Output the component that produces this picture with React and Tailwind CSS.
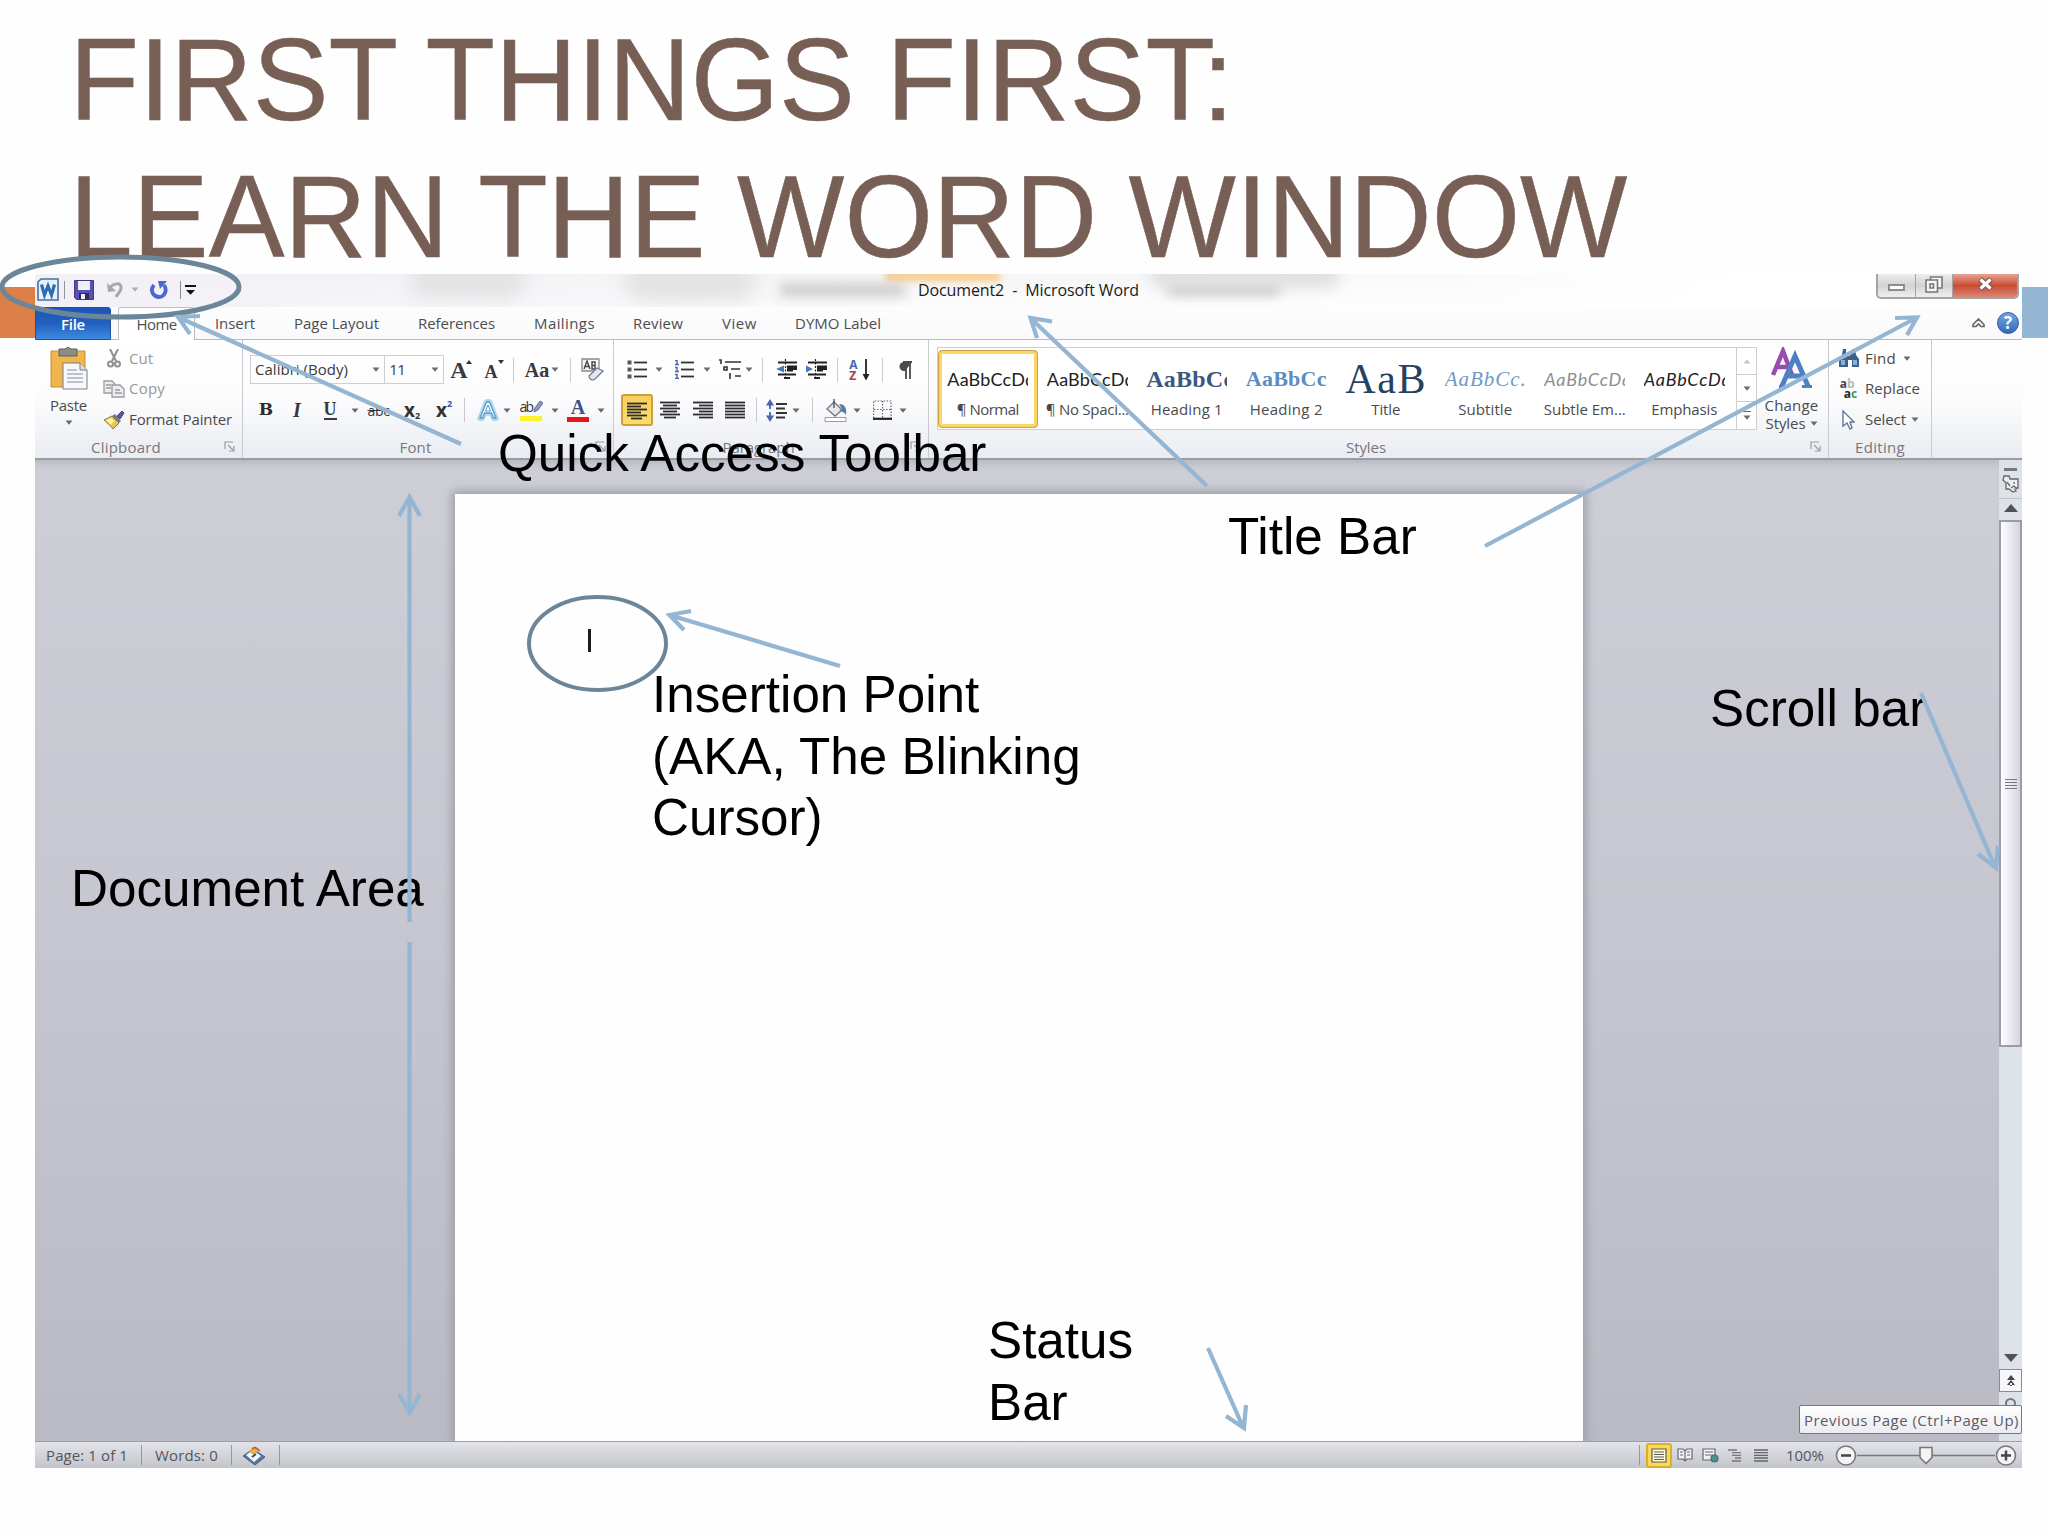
import React, { useLayoutEffect, useRef, useState } from "react";

/* Text whose tracking is adjusted so that it fills a given width. */
function Fit({ w, className = "", children }) {
  const ref = useRef(null);
  const [ls, setLs] = useState(0);
  useLayoutEffect(() => {
    const natural = ref.current.getBoundingClientRect().width;
    setLs((w - natural) / String(children).length);
  }, [w, children]);
  return (
    <span ref={ref} className={"inline-block whitespace-pre " + className} style={{ letterSpacing: ls }}>
      {children}
    </span>
  );
}

const Cell = ({ className = "", children }) => (
  <div className={"flex shrink-0 items-center justify-center " + className}>{children}</div>
);

const Down = ({ className = "" }) => (
  <svg width="8" height="5" viewBox="0 0 8 5" className={"shrink-0 " + className}>
    <path d="M0.5 0.5h7L4 4.7z" fill="#6a6a70" />
  </svg>
);

const Sep = ({ className = "h-6 bg-[#c9c9cd]" }) => <div className={"w-px shrink-0 " + className} />;

const Launcher = () => (
  <svg width="11" height="11" viewBox="0 0 11 11" fill="none" stroke="#9a9aa0" strokeWidth="1.2">
    <path d="M1 8V1h8M4 4l5 5M10 5v5H5" />
  </svg>
);

const Lines = ({ rows, className = "" }) => (
  <svg width="20" height="18" viewBox="0 0 20 18" className={className} stroke="#2c2c30" strokeWidth="1.8">
    {rows.map(([a, b], i) => (
      <path key={i} d={`M${a} ${1.5 + i * 3}H${b}`} />
    ))}
  </svg>
);

const Group = ({ label, w, className = "", launcher, children }) => (
  <div className={"flex h-full shrink-0 flex-col border-r border-[#c8cad0] " + className}>
    <div className="h-[95px]">{children}</div>
    <div className="flex h-[23px] items-center">
      <div className="flex-1 text-center leading-5 text-[#77777c]">
        <Fit w={w}>{label}</Fit>
      </div>
      {launcher && <Cell className="w-[25px]"><Launcher /></Cell>}
    </div>
  </div>
);

function TitleBar() {
  return (
    <div className="relative flex h-[33px] items-start overflow-hidden bg-gradient-to-b from-[#f5f5f6] to-[#fdfdfd]">
      <div className="absolute inset-0 bg-gradient-to-r from-[#f2f0f5] via-transparent to-white" />
      <div className="absolute left-[375px] top-[-12px] h-9 w-[115px] rounded-full bg-[#e2e2e4] blur-[9px]" />
      <div className="absolute left-[590px] top-[-10px] h-9 w-[130px] rounded-full bg-[#e2e2e4] blur-[9px]" />
      <div className="absolute left-[850px] top-[-8px] h-4 w-[115px] bg-[#f7d199] blur-[3px]" />
      <div className="absolute left-[745px] top-[10px] h-3 w-[125px] bg-[#c9c9ca] blur-[6px]" />
      <div className="absolute left-[1133px] top-[9px] h-3 w-[112px] bg-[#c4c4c6] blur-[6px]" />
      <div className="absolute left-[1115px] top-[-14px] h-7 w-[190px] rounded-full bg-[#e0e0e2] blur-[7px]" />
      <div className="absolute left-[1400px] top-0 h-full w-[587px] bg-gradient-to-r from-transparent via-white to-white" />
      <div className="relative flex h-[31px] w-full items-center">
        <Cell className="w-[25px]">
          <svg width="22" height="23" viewBox="0 0 22 23">
            <path d="M4 1h17v21H1V4z" fill="#e8f1fb" stroke="#47719f" strokeWidth="1.6" />
            <path d="M4.5 6.5l3 10.5 3.5-9 3.5 9 3-10.5" fill="none" stroke="#2b6cb2" strokeWidth="3.2" />
          </svg>
        </Cell>
        <Cell className="w-[9px]"><Sep className="h-[18px] bg-[#8b9a99]" /></Cell>
        <Cell className="w-[30px]">
          <svg width="20" height="20" viewBox="0 0 20 20">
            <path d="M0.5 0.5h19v19h-17l-2-2z" fill="#5a50b4" stroke="#3f3890" />
            <path d="M4 1h12v9H4z" fill="#eef0fb" />
            <path d="M5 13h10v6H5z" fill="#2d2a5c" />
            <path d="M7 14h4v5H7z" fill="#eef0fb" />
          </svg>
        </Cell>
        <Cell className="w-[32px]">
          <svg width="18" height="18" viewBox="0 0 18 18" fill="none" stroke="#a9a6ac" strokeWidth="3">
            <path d="M4 7c3-5 12-6 11 0 0 4-3 5-5 9" />
            <path d="M1 2l1 9 8-1z" fill="#a9a6ac" stroke="none" />
          </svg>
        </Cell>
        <Cell className="w-[8px]"><Down className="opacity-50" /></Cell>
        <Cell className="w-[40px]">
          <svg width="20" height="20" viewBox="0 0 20 20" fill="none" stroke="#4a68d0" strokeWidth="3.8">
            <path d="M5 5c-5 6 0 12 5 12s9-6 5-12" />
            <path d="M9 1h9L11 9z" fill="#4a68d0" stroke="none" />
          </svg>
        </Cell>
        <Cell className="w-[2px]"><Sep className="h-[18px] bg-[#8b8b8f]" /></Cell>
        <Cell className="w-[19px]">
          <svg width="11" height="10" viewBox="0 0 11 10" fill="#111"><path d="M0 0h11v2H0zM1 5h9L5.500 9.800z" /></svg>
        </Cell>
        <div className="ml-[718px] flex-1 text-[16px] leading-5 text-[#1b1b1d]">
          <Fit w={221}>Document2  -  Microsoft Word</Fit>
        </div>
      </div>
      <div className="absolute right-[3px] top-0 flex h-[25px] w-[143px] overflow-hidden rounded-b-[5px] border-2 border-t-0 border-[#a4a4a6] bg-gradient-to-b from-[#eeeeef] via-[#d2d2d4] to-[#f0f0f0]">
        <Cell className="w-[38px] border-r border-[#a4a4a6]">
          <div className="mt-1 h-[7px] w-[17px] border-2 border-[#8d8d90] bg-white" />
        </Cell>
        <Cell className="w-[37px] border-r border-[#a4a4a6]">
          <svg width="18" height="17" viewBox="0 0 18 17" fill="#f6f6f6" stroke="#77777a" strokeWidth="1.6" className="-mt-0.5">
            <path d="M5.500 1h11.500v11H5.500z" /><path d="M1 4h11.500v12H1z" /><path d="M5 8h3.500v4H5z" />
          </svg>
        </Cell>
        <Cell className="flex-1 bg-gradient-to-b from-[#e7a294] via-[#cc4a33] to-[#d98573]">
          <svg width="17" height="14" viewBox="0 0 17 14" className="-mt-1">
            <path d="M3 2l11 10M14 2L3 12" stroke="#7a5a56" strokeWidth="5.500" />
            <path d="M3.500 2.500l10 9M13.500 2.500l-10 9" stroke="#fff" strokeWidth="3.200" />
          </svg>
        </Cell>
      </div>
    </div>
  );
}

function Tabs() {
  return (
    <div className="flex h-[33px] items-stretch bg-gradient-to-b from-[#fdfdfd] to-[#f9f9fb] text-[15px] leading-5 text-[#4d4d50]">
      <Cell className="w-[76px] rounded-t-[3px] border border-[#234f9c] bg-gradient-to-b from-[#1d55b8] via-[#2360c0] to-[#3d8be0] font-semibold text-white">
        <Fit w={24}>File</Fit>
      </Cell>
      <div className="w-[7px] border-b border-[#b9b9bd]" />
      <Cell className="w-[77px] rounded-t-[3px] border border-b-0 border-[#bfbfc3] bg-white">
        <Fit w={40}>Home</Fit>
      </Cell>
      <div className="flex flex-1 items-center border-b border-[#b9b9bd]">
        <Fit w={40} className="ml-[20px]">Insert</Fit>
        <Fit w={85} className="ml-[39px]">Page Layout</Fit>
        <Fit w={77} className="ml-[39px]">References</Fit>
        <Fit w={61} className="ml-[39px]">Mailings</Fit>
        <Fit w={50} className="ml-[38px]">Review</Fit>
        <Fit w={35} className="ml-[39px]">View</Fit>
        <Fit w={86} className="ml-[38px]">DYMO Label</Fit>
        <div className="flex-1" />
        <svg width="13" height="10" viewBox="0 0 13 10" fill="none" stroke="#66666a" strokeWidth="1.600">
          <path d="M1 6.500L6.500 1 12 6.500v2H9L6.500 6 4 8.500H1z" />
        </svg>
        <div className="ml-[12px] mr-[3px] flex size-[22px] items-center justify-center rounded-full border border-[#2d5ca8] bg-gradient-to-b from-[#76a5e2] to-[#3468bd] text-[17px] font-bold text-white">?</div>
      </div>
    </div>
  );
}

function Clipboard() {
  return (
    <Group label="Clipboard" w={70} launcher className="w-[208px]">
      <div className="flex">
        <div className="flex w-[67px] flex-col items-center pt-[7px] text-[#4a4a4d]">
          <svg width="38" height="43" viewBox="0 0 38 43">
            <path d="M1 4h34v36H1z" fill="#f0b54c" stroke="#c68f35" />
            <path d="M9 2h6l3-2 3 2h6v7H9z" fill="#8b8c86" stroke="#5e5f5a" />
            <path d="M13 16h17l7 7v19H13z" fill="#f7f8fb" stroke="#777d88" />
            <path d="M17 23h10M17 27h16M17 31h16M17 35h16" stroke="#a9b0c0" strokeWidth="1.400" />
            <path d="M30 16v7h7" fill="#dde" stroke="#777d88" />
          </svg>
          <div className="mt-[5px] leading-5"><Fit w={37}>Paste</Fit></div>
          <Down className="mt-[5px]" />
        </div>
        <div className="flex flex-1 flex-col pt-[3px] text-[#97979a]">
          <div className="flex h-[30px] items-center">
            <Cell className="w-[27px] justify-end pr-2">
              <svg width="14" height="19" viewBox="0 0 14 19" fill="none" stroke="#8f8f93" strokeWidth="2">
                <path d="M3 0l6 12M11 0L5 12" /><circle cx="3.500" cy="15" r="2.500" /><circle cx="10.500" cy="15" r="2.500" />
              </svg>
            </Cell>
            <Fit w={24}>Cut</Fit>
          </div>
          <div className="flex h-[31px] items-center">
            <Cell className="w-[27px] pr-1">
              <svg width="22" height="18" viewBox="0 0 22 18" fill="#eeeef0" stroke="#9b9ba0" strokeWidth="1.300">
                <path d="M1 1h8l3 3v9H1z" /><path d="M9 5h8l4 4v8H9z" /><path d="M3 5h5M3 8h5M12 10h5M12 13h7" />
              </svg>
            </Cell>
            <Fit w={36}>Copy</Fit>
          </div>
          <div className="flex h-[31px] items-center text-[#4a4a4d]">
            <Cell className="w-[27px] pr-1">
              <svg width="22" height="20" viewBox="0 0 22 20">
                <path d="M1 10l8-4 7 7-6 6C7 15 4 13 1 10z" fill="#e6c84e" stroke="#8d7a35" />
                <path d="M3 10l5-2 3 3-3 4z" fill="#fff2a8" />
                <path d="M9 6l3-2 6 7-2 2z" fill="#77757d" />
                <path d="M14 6l5-5 2 2-4 6z" fill="#63589c" stroke="#48407c" />
              </svg>
            </Cell>
            <Fit w={103}>Format Painter</Fit>
          </div>
        </div>
      </div>
    </Group>
  );
}

function FontGroup() {
  const serif = "font-['Liberation_Serif',serif] font-bold leading-none text-[#39393c]";
  return (
    <Group label="Font" w={32} launcher className="w-[371px]">
      <div className="mt-[15px] flex h-[29px] pl-[7px] text-[#3a3a3d]">
        <div className="flex w-[136px] items-center justify-between border border-[#cfcfd3] pl-1 pr-1">
          <Fit w={93}>Calibri (Body)</Fit><Down />
        </div>
        <div className="flex w-[59px] items-center justify-between border border-l-0 border-[#cfcfd3] pl-1 pr-1">
          <Fit w={16}>11</Fit><Down />
        </div>
        <Cell className={"w-[34px] text-[24px] " + serif}>A<svg width="6" height="4" viewBox="0 0 6 4" className="-ml-0.5 -mt-4"><path d="M0 4h6L3 0z" fill="#333" /></svg></Cell>
        <Cell className={"w-[32px] text-[18px] " + serif}><span className="mt-1">A</span><svg width="6" height="4" viewBox="0 0 6 4" className="-mt-4"><path d="M0 0h6L3 4z" fill="#333" /></svg></Cell>
        <Cell className="w-[6px]"><Sep /></Cell>
        <Cell className={"w-[52px] gap-0.5 text-[20px] " + serif}>Aa<Down /></Cell>
        <Cell className="w-[4px]"><Sep /></Cell>
        <Cell className="w-[41px]">
          <svg width="23" height="23" viewBox="0 0 23 23" fill="none">
            <path d="M1 1h17v12H1z" fill="#f6f6f8" stroke="#88888e" strokeWidth="1.300" />
            <path d="M3 11l3-8 3 8M4.500 8.500h3M11 4h3v7h-3zM11 7.500h3" stroke="#44444a" strokeWidth="1.400" />
            <path d="M8 18l8-8 6 3-8 8c-3 2-6 0-6-3z" fill="#e3e6ef" stroke="#777d94" strokeWidth="1.300" />
          </svg>
        </Cell>
      </div>
      <div className="mt-[10px] flex h-[32px] pl-[9px]">
        <Cell className="w-[28px] font-['DejaVu_Serif',serif] text-[17px] font-bold text-[#2c2c2f]">B</Cell>
        <Cell className={"w-[34px] text-[20px] italic " + serif}>I</Cell>
        <Cell className="w-[32px]"><span className={"border-b-2 border-[#39393c] text-[18px] " + serif}>U</span></Cell>
        <Cell className="w-[17px]"><Down /></Cell>
        <Cell className="w-[31px] text-[14px] text-[#39393c] line-through"><Fit w={22}>abc</Fit></Cell>
        <Cell className="w-[36px] text-[19px] font-bold text-[#333]">x<span className="-mb-3 text-[9px]">2</span></Cell>
        <Cell className="w-[28px] text-[19px] font-bold text-[#333]">x<span className="-mt-3 text-[9px] text-[#3b4fa8]">2</span></Cell>
        <Cell className="w-[12px]"><Sep /></Cell>
        <Cell className="w-[36px]">
          <svg width="22" height="22" viewBox="0 0 22 22" fill="none" strokeLinejoin="round">
            <path d="M2 20L9 2h4l7 18h-4l-2-5H8l-2 5z" stroke="#a9d5ee" strokeWidth="3.500" />
            <path d="M3 19L9.500 3h3L19 19h-2.500l-2-5h-7l-2 5z" fill="#f4fbff" stroke="#5b9cc6" strokeWidth="1.300" />
            <path d="M8.500 12h5L11 6z" fill="#fff" stroke="#5b9cc6" />
          </svg>
        </Cell>
        <Cell className="w-[2px]"><Down /></Cell>
        <Cell className="w-[46px]">
          <div className="flex flex-col">
            <div className="flex h-[15px] items-center">
              <span className="text-[14px] leading-none text-[#333]"><Fit w={13}>ab</Fit></span>
              <svg width="10" height="13" viewBox="0 0 10 13"><path d="M1 12l1-4 5-7 3 2-5 7z" fill="#8f95c6" stroke="#666ca0" /></svg>
            </div>
            <div className="mt-0.5 h-[5px] w-[22px] bg-[#fbf22a]" />
          </div>
        </Cell>
        <Cell className="w-[2px]"><Down /></Cell>
        <Cell className="w-[44px]">
          <div className="flex w-[22px] flex-col items-center">
            <span className="font-['Liberation_Serif',serif] text-[20px] font-bold leading-[16px] text-[#3f4f8c]">A</span>
            <div className="mt-0.5 h-[5px] w-full bg-[#ee1216]" />
          </div>
        </Cell>
        <Cell className="w-[2px]"><Down /></Cell>
      </div>
    </Group>
  );
}

const Bullets = ({ numbered }) => (
  <svg width="20" height="19" viewBox="0 0 20 19" stroke="#333" strokeWidth="1.800">
    {[2.5, 9.5, 16.5].map((y) => (
      <g key={y}>
        <path d={`M7 ${y}H20`} />
        {numbered ? <path d={`M1 ${y - 2}h2v4M1 ${y + 2}h4`} stroke="#4c63ad" fill="none" strokeWidth="1.400" /> : <path d={`M0.500 ${y}h4`} strokeWidth="4" stroke="#55565c" />}
      </g>
    ))}
  </svg>
);

const Indent = ({ flip }) => (
  <svg width="23" height="21" viewBox="0 0 23 21" stroke="#222" strokeWidth="1.800">
    <path d="M3 3.500h19M12 7.500h10M12 11.500h6M3 15.500h18M9 19h6" />
    <path d="M12 9.500h10" strokeWidth="3" />
    <path d="M10.500 0v21" strokeWidth="1.200" strokeDasharray="2 1.500" />
    <path d={flip ? "M1 6.500v7l7-3.500z" : "M9 6.500v7L1 10z"} fill="#4677bd" stroke="none" />
  </svg>
);

function Paragraph() {
  return (
    <Group label="Paragraph" w={72} launcher className="w-[315px]">
      <div className="mt-[13px] flex h-[33px] pl-[9px]">
        <Cell className="w-[28px]"><Bullets /></Cell>
        <Cell className="w-[16px]"><Down /></Cell>
        <Cell className="w-[33px]"><Bullets numbered /></Cell>
        <Cell className="w-[14px]"><Down /></Cell>
        <Cell className="w-[31px]">
          <svg width="24" height="21" viewBox="0 0 24 21" stroke="#333" strokeWidth="1.600" fill="none">
            <path d="M1 1h2v4M7 3h16M6 8h3v3H6zM13 10h9M12 14v6M17 17h6" />
          </svg>
        </Cell>
        <Cell className="w-[8px]"><Down /></Cell>
        <Cell className="w-[19px]"><Sep /></Cell>
        <Cell className="w-[28px]"><Indent /></Cell>
        <Cell className="w-[32px]"><Indent flip /></Cell>
        <Cell className="w-[10px]"><Sep /></Cell>
        <Cell className="w-[35px]">
          <div className="flex flex-col text-[12px] font-bold leading-[11px]">
            <span className="text-[#4467ad]">A</span><span className="text-[#a63b52]">Z</span>
          </div>
          <svg width="8" height="22" viewBox="0 0 8 22" className="ml-1"><path d="M4 0v18" stroke="#222" strokeWidth="1.800" /><path d="M0.500 15h7L4 21.500z" fill="#222" /></svg>
        </Cell>
        <Cell className="w-[10px]"><Sep /></Cell>
        <Cell className="w-[36px]">
          <svg width="14" height="18" viewBox="0 0 14 18"><path d="M14 1H6a4.500 4.500 0 000 9h1" fill="#4a4a4f" /><path d="M5 1h9M8 1v17M12 1v17" stroke="#4a4a4f" strokeWidth="1.800" /></svg>
        </Cell>
      </div>
      <div className="mt-[8px] flex h-[32px] pl-[7px]">
        <Cell className="w-[32px] rounded-[3px] border-2 border-[#cf9f3d] bg-gradient-to-b from-[#f6cf5e] to-[#fbdd66]">
          <Lines className="mt-0.5" rows={[[0, 20], [0, 14], [0, 20], [0, 14], [0, 20], [4, 15]]} />
        </Cell>
        <Cell className="w-[34px]"><Lines rows={[[0, 20], [3, 17], [0, 20], [3, 17], [0, 20], [4, 16]]} /></Cell>
        <Cell className="w-[32px]"><Lines rows={[[0, 20], [6, 20], [0, 20], [6, 20], [0, 20], [6, 20]]} /></Cell>
        <Cell className="w-[31px]"><Lines rows={[[0, 20], [0, 20], [0, 20], [0, 20], [0, 20], [0, 20]]} /></Cell>
        <Cell className="w-[12px]"><Sep /></Cell>
        <Cell className="w-[30px]">
          <svg width="22" height="23" viewBox="0 0 22 23" stroke="#333" strokeWidth="1.800">
            <path d="M10 5h11M10 9.500h9M10 14h11M10 18.500h9" />
            <path d="M4 4v6M4 13v6" stroke="#4c63ad" /><path d="M0 6.500L4 0l4 6.500zM0 16.500L4 23l4-6.500z" fill="#4c63ad" stroke="none" />
          </svg>
        </Cell>
        <Cell className="w-[8px]"><Down /></Cell>
        <Cell className="w-[24px]"><Sep /></Cell>
        <Cell className="w-[24px]">
          <svg width="24" height="23" viewBox="0 0 24 23">
            <path d="M3 10l7-7 8 8-7 6z" fill="#e6e8ee" stroke="#77797f" strokeWidth="1.400" />
            <path d="M10 3V0M10 3v6" stroke="#55575c" strokeWidth="1.400" />
            <path d="M15 5c6 0 8 4 7 11-2-3-4-4-7-4l3-2z" fill="#527caa" />
            <path d="M1 18.500h21v4H1z" fill="#fff" stroke="#9a9a9e" />
          </svg>
        </Cell>
        <Cell className="w-[18px]"><Down /></Cell>
        <Cell className="w-[32px]">
          <svg width="19" height="20" viewBox="0 0 19 20" fill="none" stroke="#66676c" strokeWidth="1.200">
            <path d="M0.600 18V1h17.500v17M9.500 1v17M1 9.500h17" strokeDasharray="1.500 1.500" /><path d="M0 18.800h19" stroke="#222" strokeWidth="2.200" />
          </svg>
        </Cell>
        <Cell className="w-[10px]"><Down /></Cell>
      </div>
    </Group>
  );
}

const STYLES = [
  { s: "AaBbCcDd", c: "font-[Lato,sans-serif] text-[18px] text-[#222]", n: "¶ Normal", w: 62, sw: 88, on: true },
  { s: "AaBbCcDd", c: "font-[Lato,sans-serif] text-[18px] text-[#222]", n: "¶ No Spaci...", w: 83, sw: 88 },
  { s: "AaBbCc", c: "font-['Liberation_Serif',serif] text-[24px] font-bold text-[#3b5881]", n: "Heading 1", w: 72, sw: 88 },
  { s: "AaBbCc", c: "font-['Liberation_Serif',serif] text-[22px] font-bold text-[#5b8cc2]", n: "Heading 2", w: 73, sw: 81 },
  { s: "AaB", c: "font-['Liberation_Serif',serif] text-[42px] text-[#26405f]", n: "Title", w: 29, sw: 82 },
  { s: "AaBbCc.", c: "font-['Liberation_Serif',serif] text-[21px] italic text-[#6f9ac4]", n: "Subtitle", w: 54, sw: 82 },
  { s: "AaBbCcDd", c: "font-[Lato,sans-serif] text-[18px] italic text-[#8e8e91]", n: "Subtle Em...", w: 82, sw: 88 },
  { s: "AaBbCcDd", c: "font-[Lato,sans-serif] text-[18px] italic text-[#222]", n: "Emphasis", w: 66, sw: 88 },
];

function Styles() {
  return (
    <Group label="Styles" w={40} launcher className="w-[900px]">
      <div className="flex pt-[7px]">
        <div className="ml-[8px] flex h-[83px] w-[820px] border border-[#cdcdd2] bg-white">
          {STYLES.map((t, i) => (
            <div
              key={i}
              className={
                "mt-[2px] flex h-[78px] w-[99.500px] shrink-0 flex-col items-center rounded-[4px] border-[4px] " +
                (t.on ? "border-[#fad763] outline-[1.500px] -outline-offset-1 outline-[#c9a04c]" : "border-transparent")
              }
            >
              <div className={"mt-[4px] flex h-[42px] w-[81px] items-center overflow-hidden leading-none " + t.c}>
                <Fit w={t.sw}>{t.s}</Fit>
              </div>
              <div className="-mt-px leading-5 text-[#4a4a4d]"><Fit w={t.w}>{t.n}</Fit></div>
            </div>
          ))}
          <div className="ml-auto grid w-[20px] grid-rows-3 divide-y divide-[#cdcdd2] border-l border-[#cdcdd2]">
            <Cell><svg width="8" height="5" viewBox="0 0 8 5"><path d="M0.500 4.500h7L4 0.500z" fill="#c5c5c9" /></svg></Cell>
            <Cell><Down /></Cell>
            <Cell className="flex-col gap-[3px]"><div className="h-[1.500px] w-2 bg-[#66666a]" /><Down /></Cell>
          </div>
        </div>
        <div className="flex w-[69px] flex-col items-center text-[#4a4a4d]">
          <svg width="42" height="42" viewBox="0 0 42 42" fill="none">
            <path d="M2 28L12 4l9 24M6 20h11" stroke="#9a4bb0" strokeWidth="4.500" />
            <path d="M11 39L24 9l13 30M16 29h15" stroke="#4e80c6" strokeWidth="5" />
            <path d="M8 39.500h7M31 39.500h10" stroke="#4e80c6" strokeWidth="3" />
          </svg>
          <div className="mt-[7px] leading-[18px]"><Fit w={54}>Change</Fit></div>
          <div className="flex items-center gap-1 leading-[18px]"><Fit w={40}>Styles</Fit><Down /></div>
        </div>
      </div>
    </Group>
  );
}

function Editing() {
  return (
    <Group label="Editing" w={50} className="w-[103px]">
      <div className="flex flex-col pl-[9px] pt-[3px] text-[#4a4a4d]">
        <div className="flex h-[30px] items-center">
          <Cell className="mr-[6px] w-[21px]">
            <svg width="20" height="18" viewBox="0 0 20 18" fill="#3d5f8c"><path d="M4 0h3v4h2v3h2V4h2V0h3l1 6 3 4v8h-7v-7H9v7H0v-8l3-4z" /><path d="M2 11h4v5H2zM14 11h4v5h-4z" fill="#8fadd0" /></svg>
          </Cell>
          <Fit w={31}>Find</Fit><Down className="ml-[7px]" />
        </div>
        <div className="flex h-[31px] items-center">
          <Cell className="mr-[6px] w-[21px]">
            <div className="flex flex-col text-[12px] font-bold leading-[10px] text-[#444]">
              <span>a<span className="text-[#b8b8bb]">b</span></span>
              <span className="pl-1 text-[#222]">a<span className="text-[#3b9a55]">c</span></span>
            </div>
          </Cell>
          <Fit w={55}>Replace</Fit>
        </div>
        <div className="flex h-[31px] items-center">
          <Cell className="mr-[6px] w-[21px]">
            <svg width="13" height="20" viewBox="0 0 13 20"><path d="M1 1v15l4-3 3 6 2-1-2-6h4z" fill="#fff" stroke="#66779a" strokeWidth="1.400" /></svg>
          </Cell>
          <Fit w={41}>Select</Fit><Down className="ml-[5px]" />
        </div>
      </div>
    </Group>
  );
}

function DocumentArea() {
  return (
    <div className="flex h-[981px] bg-gradient-to-b from-[#cdced6] via-[#c6c6d0] to-[#b9bac3]">
      <div className="flex flex-1 overflow-hidden shadow-[inset_0_9px_8px_-6px_#b4b5bd]">
        <div className="ml-[420px] mt-[34px] w-[1128px] bg-[#fefefe] shadow-[0_0_9px_3px_#9c9da6]">
          <div className="ml-[133px] mt-[135px] h-[23px] w-[3px] bg-[#1c1c1e]" />
        </div>
      </div>
      <div className="flex w-[23px] flex-col items-center bg-[#dde1e8]">
        <div className="mt-[8px] h-[3px] w-[13px] bg-[#77777c]" />
        <svg width="18" height="18" viewBox="0 0 18 18" className="mt-[4px]" fill="#eeeef0" stroke="#66666a" strokeWidth="1.300">
          <path d="M2 1h5l1 3h8v9h-4l2 3-3 1-4-3H4V8L1 5z" /><path d="M5 7l3 4M12 7v2M9 13l3-2 3 3" />
        </svg>
        <div className="mt-[5px] h-px w-full bg-[#c2c3c9]" />
        <svg width="14" height="8" viewBox="0 0 14 8" className="mt-[5px]"><path d="M0 8h14L7 0z" fill="#505056" /></svg>
        <div className="mt-[8px] flex h-[527px] w-full flex-col items-center justify-center gap-[2px] border-2 border-[#9c9da4] bg-gradient-to-r from-white via-[#e9eaf2] to-[#d3d5dc]">
          <div className="h-px w-3 bg-[#7a7a80]" /><div className="h-px w-3 bg-[#7a7a80]" /><div className="h-px w-3 bg-[#7a7a80]" /><div className="h-px w-3 bg-[#7a7a80]" />
        </div>
        <svg width="14" height="8" viewBox="0 0 14 8" className="mt-[307px]"><path d="M0 0h14L7 8z" fill="#505056" /></svg>
        <div className="mt-[7px] flex h-[23px] w-full items-center justify-center border border-[#8b8c92] bg-[#f6f7fa]">
          <svg width="8" height="11" viewBox="0 0 8 11" fill="#44444a"><path d="M0 5h8L4 0zM0 10h8L4 5zM3 8h2v3H3z" /></svg>
        </div>
        <div className="mt-[6px] size-[11px] rounded-full border-2 border-[#77777c]" />
      </div>
    </div>
  );
}

function StatusBar() {
  return (
    <div className="flex h-[27px] items-center border-t border-[#9c9da5] bg-gradient-to-b from-[#e3e4e9] to-[#c3c5cc] text-[15px] leading-5 text-[#55555a]">
      <Fit w={82} className="ml-[11px]">Page: 1 of 1</Fit>
      <Sep className="ml-[13px] h-5 bg-[#96979e]" />
      <Fit w={63} className="ml-[13px]">Words: 0</Fit>
      <Sep className="ml-[13px] h-5 bg-[#96979e]" />
      <svg width="24" height="21" viewBox="0 0 24 21" className="ml-[10px]">
        <path d="M1 11l10-7 12 8-10 8z" fill="#5877a0" stroke="#445f85" /><path d="M4 10l7-5 8 6-7 6z" fill="#f4f6fa" />
        <path d="M7 7l6-6 4 3-5 6z" fill="#e4b53c" /><path d="M10 4c3-3 5 0 8 2" stroke="#c9503a" strokeWidth="1.500" fill="none" /><path d="M10 12l4-3" stroke="#444a55" strokeWidth="2" />
      </svg>
      <Sep className="ml-[13px] h-5 bg-[#96979e]" />
      <div className="flex-1" />
      <Sep className="h-5 bg-[#96979e]" />
      <Cell className="ml-[6px] h-[25px] w-[26px] rounded-[3px] border-2 border-[#dcae2e] bg-[#f8d95a]">
        <svg width="16" height="15" viewBox="0 0 16 15" fill="#fffbe4" stroke="#5f5a4a" strokeWidth="1.200"><path d="M1 1h14v13H1zM3 4h10M3 6.500h10M3 9h10M3 11.500h10" /></svg>
      </Cell>
      <Cell className="w-[26px]">
        <svg width="16" height="14" viewBox="0 0 16 14" fill="#f2f2f5" stroke="#66666c" strokeWidth="1.200"><path d="M1 1h5l2 2 2-2h5v10h-5l-2 2-2-2H1zM8 3v10M3 4h3M3 7h3M10 4h3M10 7h3" /></svg>
      </Cell>
      <Cell className="w-[24px]">
        <svg width="17" height="15" viewBox="0 0 17 15" fill="#f2f2f5" stroke="#66666c" strokeWidth="1.200"><path d="M1 1h12v11H1zM3 4h8M3 7h8" /><circle cx="12.500" cy="10.500" r="3.500" fill="#4c9288" stroke="#3c6c84" /></svg>
      </Cell>
      <Cell className="w-[26px]">
        <svg width="14" height="13" viewBox="0 0 14 13" stroke="#77777c" strokeWidth="1.300"><path d="M0 1h9M4 3.700h9M4 6.400h9M7 9h6M4 12h9" /></svg>
      </Cell>
      <Cell className="w-[26px]">
        <svg width="14" height="13" viewBox="0 0 14 13" stroke="#66666c" strokeWidth="1.300"><path d="M0 1h14M0 3.700h14M0 6.400h14M0 9h14M0 12h14" /></svg>
      </Cell>
      <Fit w={38} className="ml-[12px]">100%</Fit>
      <svg width="186" height="25" viewBox="0 0 186 25" className="ml-[9px] mr-[3px]" fill="#f3f3f6" stroke="#77777c" strokeWidth="1.600">
        <path d="M24 12.500h138" /><circle cx="13" cy="12.500" r="9.500" /><circle cx="173" cy="12.500" r="9.500" />
        <path d="M8 12.500h10M168 12.500h10M173 7.500v10" stroke="#44444a" strokeWidth="2.400" />
        <path d="M87 4.500h12v10l-6 6-6-6z" />
      </svg>
    </div>
  );
}

const ARROWS = [
  "M461 444L180 318M200 316L178 317L190 334",
  "M1207 486L1032 319.500M1052 321.500L1030.500 318L1037 338",
  "M1485 546L1916 318M1895 318L1917 317.500L1907 335",
  "M840 666L671 615.500M691 611L669.500 615L684 630",
  "M409.500 922V498M399 516L409.500 497L420 516",
  "M409.500 942V1412M399 1394L409.500 1413L420 1394",
  "M1921 693L1995 867M1978 854L1996 868L1998 846",
  "M1208 1348L1243 1427M1226 1416L1244 1428L1246 1405",
];

const Label = ({ className, children }) => (
  <div className={"absolute whitespace-pre font-['Liberation_Sans',Arial,sans-serif] text-[51.200px] leading-[61.500px] text-black " + className}>{children}</div>
);

export default function App() {
  return (
    <div className="relative h-[1536px] w-[2048px] overflow-hidden bg-[#fefefe] font-['Open_Sans','Noto_Sans',sans-serif] text-[15px]">
      <h1 className="h-[274px] origin-left scale-x-[0.980] whitespace-pre pl-[71px] pt-[12px] font-['Liberation_Sans',Arial,sans-serif] text-[116px] leading-[136.500px] text-[#775f55] [-webkit-text-stroke:0.500px_#775f55]">
        {"FIRST THINGS FIRST:\nLEARN THE WORD WINDOW"}
      </h1>
      <div className="flex">
        <div className="mt-[13px] h-[51px] w-[35px] bg-[#dd8047]" />
        <div className="w-[1987px]">
          <TitleBar />
          <Tabs />
          <div className="flex h-[120px] border-b-2 border-[#9a9ca3] bg-gradient-to-b from-white via-[#fcfcfd] to-[#e9ecf1]">
            <Clipboard />
            <FontGroup />
            <Paragraph />
            <Styles />
            <Editing />
          </div>
          <DocumentArea />
          <StatusBar />
        </div>
        <div className="mt-[13px] h-[51px] flex-1 bg-[#94b6d2]" />
      </div>

      <div className="absolute left-[1799px] top-[1405px] flex h-[29px] w-[223px] items-center rounded-[2px] border border-[#77777c] bg-gradient-to-b from-white to-[#ebebf1] pl-[4px] leading-5 text-[#5c5c61]">
        <Fit w={215}>Previous Page (Ctrl+Page Up)</Fit>
      </div>

      <Label className="left-[498px] top-[423px]">Quick Access Toolbar</Label>
      <Label className="left-[1228px] top-[506px]">Title Bar</Label>
      <Label className="left-[652px] top-[664px]">{"Insertion Point\n(AKA, The Blinking\nCursor)"}</Label>
      <Label className="left-[1710px] top-[678px]">Scroll bar</Label>
      <Label className="left-[71px] top-[858px]">Document Area</Label>
      <Label className="left-[988px] top-[1310px]">{"Status\nBar"}</Label>

      <svg className="absolute left-0 top-0" width="2048" height="1536" viewBox="0 0 2048 1536" fill="none">
        <ellipse cx="120.500" cy="287" rx="118.500" ry="30" stroke="#6b8599" strokeWidth="5" />
        <ellipse cx="597.500" cy="643.500" rx="68.500" ry="46.500" stroke="#6b8599" strokeWidth="4" />
        {ARROWS.map((d) => (
          <path key={d} d={d} stroke="#94b6d2" strokeWidth="4.200" />
        ))}
      </svg>
    </div>
  );
}
